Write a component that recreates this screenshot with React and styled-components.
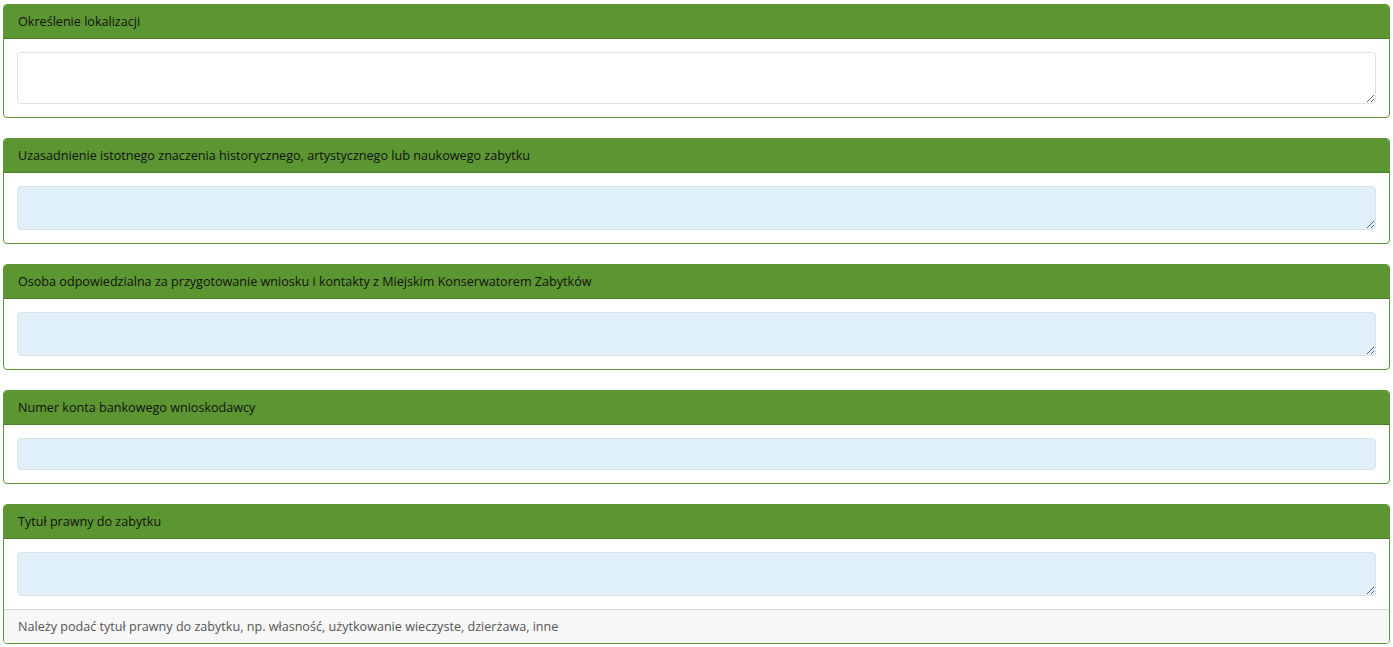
import React from "react";
import styled, { createGlobalStyle } from "styled-components";

const Global = createGlobalStyle`
  html, body { margin: 0; padding: 0; background: #fff; }
  body { font-family: "Open Sans", "Noto Sans", sans-serif; font-size: 12.6px; color: #212529; }
  * { box-sizing: border-box; }
`;

const Page = styled.div`
  padding: 4px 3px 0 3px;
  display: flex;
  flex-direction: column;
  gap: 20px;
`;

const Card = styled.section`
  border: 1px solid #5c9632;
  border-radius: 4px;
  background: #fff;
  overflow: hidden;
`;

const Header = styled.div`
  background: #5c9632;
  border-bottom: 1px solid #4a7d27;
  height: 34px;
  padding: 0 14px;
  display: flex;
  align-items: center;
  color: #111;
  font-size: 12.6px;
`;

const Body = styled.div`
  padding: 13px;
`;

const Area = styled.textarea`
  display: block;
  width: 100%;
  height: ${(p) => p.$h}px;
  border: 1px solid #dde1e6;
  border-radius: 4px;
  background: ${(p) => (p.$filled ? "#dff0fb" : "#fff")};
  resize: vertical;
  font: inherit;
  outline: none;
`;

const Input = styled.input`
  display: block;
  width: 100%;
  height: 32px;
  border: 1px solid #dde1e6;
  border-radius: 4px;
  background: #dff0fb;
  font: inherit;
  outline: none;
`;

const Footer = styled.div`
  background: #f7f7f7;
  border-top: 1px solid #d6d6d6;
  height: 34px;
  padding: 0 14px;
  display: flex;
  align-items: center;
  color: #555;
  font-size: 12.6px;
`;

export default function App() {
  return (
    <>
      <Global />
      <Page>
        <Card>
          <Header>Określenie lokalizacji</Header>
          <Body>
            <Area $h={52} />
          </Body>
        </Card>
        <Card>
          <Header>Uzasadnienie istotnego znaczenia historycznego, artystycznego lub naukowego zabytku</Header>
          <Body>
            <Area $h={44} $filled />
          </Body>
        </Card>
        <Card>
          <Header>Osoba odpowiedzialna za przygotowanie wniosku i kontakty z Miejskim Konserwatorem Zabytków</Header>
          <Body>
            <Area $h={44} $filled />
          </Body>
        </Card>
        <Card>
          <Header>Numer konta bankowego wnioskodawcy</Header>
          <Body>
            <Input />
          </Body>
        </Card>
        <Card>
          <Header>Tytuł prawny do zabytku</Header>
          <Body>
            <Area $h={44} $filled />
          </Body>
          <Footer>Należy podać tytuł prawny do zabytku, np. własność, użytkowanie wieczyste, dzierżawa, inne</Footer>
        </Card>
      </Page>
    </>
  );
}
